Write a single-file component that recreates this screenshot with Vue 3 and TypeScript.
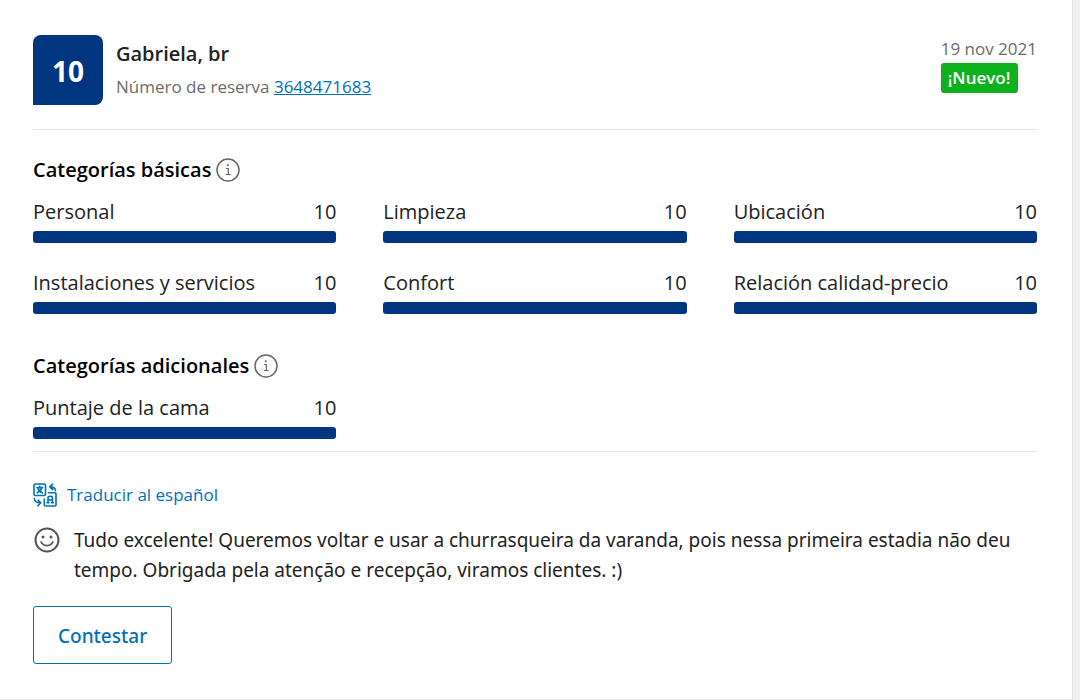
<script setup lang="ts">
interface Category {
  name: string
  score: number
}
interface Section {
  title: string
  help: string
  items: Category[]
}

const sections: Section[] = [
  {
    title: 'Categorías básicas',
    help: 'Información sobre las categorías básicas',
    items: [
      { name: 'Personal', score: 10 },
      { name: 'Limpieza', score: 10 },
      { name: 'Ubicación', score: 10 },
      { name: 'Instalaciones y servicios', score: 10 },
      { name: 'Confort', score: 10 },
      { name: 'Relación calidad-precio', score: 10 },
    ],
  },
  {
    title: 'Categorías adicionales',
    help: 'Información sobre las categorías adicionales',
    items: [{ name: 'Puntaje de la cama', score: 10 }],
  },
]
</script>

<template>
  <main class="page">
    <article class="card">
      <header class="head">
        <div class="score">10</div>
        <div class="guest">
          <h1 class="name">Gabriela, br</h1>
          <p class="booking">Número de reserva <a href="#reserva">3648471683</a></p>
        </div>
        <div class="meta">
          <time class="date" datetime="2021-11-19">19 nov 2021</time>
          <span class="new">¡Nuevo!</span>
        </div>
      </header>

      <div class="ratings">
        <section v-for="section in sections" :key="section.title">
          <h2 class="title">
            {{ section.title }}
            <button class="info" type="button" :aria-label="section.help">
              <svg viewBox="0 0 24 24" width="24" height="24" fill="none" stroke="currentColor">
                <circle cx="12" cy="12" r="11" stroke-width="1.5" />
                <path d="M10 10.5h2.3v6M9.8 16.5h4.8" stroke-width="1.2" />
                <circle cx="11.8" cy="7.3" r="1" fill="currentColor" stroke="none" />
              </svg>
            </button>
          </h2>
          <ul class="grid">
            <li v-for="item in section.items" :key="item.name">
              <div class="row">
                <span>{{ item.name }}</span>
                <span>{{ item.score }}</span>
              </div>
              <div class="track">
                <div class="fill" :style="{ width: item.score * 10 + '%' }"></div>
              </div>
            </li>
          </ul>
        </section>
      </div>

      <a class="translate" href="#traducir">
        <svg viewBox="0 0 24 24" width="24" height="24" fill="none" stroke="currentColor" stroke-width="1.6" stroke-linecap="round" stroke-linejoin="round">
          <rect x="1" y="1" width="11.5" height="11.5" rx="1.2" />
          <path d="M4 4.6h5.6M6.8 3.3v1.3M8.8 4.8C8.2 7 6.6 8.8 4.2 9.8M4.9 5c.6 2.2 2 3.8 4.5 4.8" />
          <path d="M15.5 9.8H22q1 0 1 1V22q0 1-1 1H12.3q-1 0-1-1v-6" />
          <path d="M15 19.8v-5q0-1.5 2.2-1.5t2.2 1.5v5M15 17h4.4M14 19.8h2M18.4 19.8h2" />
          <path d="M22.5 7.8c0-2.5-1.3-3.9-5.500-3.900M19.700 1.200L16.800 3.900l2.900 2.800" />
          <path d="M1.3 15.5c.2 2.600 1.800 4.300 6.300 4.300M5 17l2.800 2.800L5 22.600" />
        </svg>
        <span>Traducir al español</span>
      </a>

      <div class="review">
        <svg class="smile" viewBox="0 0 26 26" width="26" height="26" fill="none" stroke="currentColor">
          <circle cx="13" cy="13" r="11.5" stroke-width="2" />
          <circle cx="9" cy="10" r="1.5" fill="currentColor" stroke="none" />
          <circle cx="17" cy="10" r="1.5" fill="currentColor" stroke="none" />
          <path d="M7.2 15c2 4.700 9.600 4.700 11.600 0" stroke-width="1.8" stroke-linecap="round" />
        </svg>
        <p class="text">Tudo excelente! Queremos voltar e usar a churrasqueira da varanda, pois nessa primeira estadia não deu tempo. Obrigada pela atenção e recepção, viramos clientes. :)</p>
      </div>

      <button class="reply" type="button">Contestar</button>
    </article>
  </main>
</template>

<style>
body {
  background: #f1f1f1;
}
</style>

<style scoped>
.page {
  padding-right: 7px;
  font-family: "Segoe UI", "Open Sans", "Noto Sans", sans-serif;
  font-size: 20px;
  line-height: 30px;
  color: #222;
}
.card {
  padding: 35px 35px 35px 33px;
  background: #fff;
  border-right: 1px solid #e4e4e4;
  border-bottom: 2px solid #e4e4e4;
}
h1,
h2,
p,
ul {
  margin: 0;
  padding: 0;
}
ul {
  list-style: none;
}
.head {
  display: flex;
  gap: 13px;
  padding-bottom: 24px;
  border-bottom: 1px solid #e6e6e6;
}
.score {
  flex: none;
  width: 70px;
  height: 70px;
  line-height: 72px;
  text-align: center;
  font-size: 28px;
  font-weight: 700;
  color: #fff;
  background: #003580;
  border-radius: 8px 8px 8px 0;
}
.guest {
  flex: 1;
  padding-top: 3px;
}
.name {
  font-size: 20px;
  line-height: 32px;
  font-weight: 600;
}
.booking {
  font-size: 17px;
  line-height: 34px;
  color: #6b6b6b;
}
a {
  color: #0071b8;
}
.meta {
  display: flex;
  flex-direction: column;
  align-items: flex-start;
}
.date {
  font-size: 17px;
  line-height: 28px;
  color: #6b6b6b;
}
.new {
  padding: 0 8px 0 7px;
  font-size: 17px;
  line-height: 30px;
  font-weight: 600;
  color: #fff;
  background: #0db11c;
  border-radius: 3px;
}
.ratings {
  display: grid;
  gap: 37px;
  padding: 25px 0 12px;
  border-bottom: 1px solid #e6e6e6;
}
.title {
  display: flex;
  align-items: center;
  gap: 5px;
  margin-bottom: 14px;
  font-size: 20px;
  line-height: 30px;
  font-weight: 600;
  color: #000;
}
.info {
  display: flex;
  padding: 0;
  border: 0;
  background: none;
  color: #666;
}
.grid {
  display: grid;
  grid-template-columns: repeat(3, 1fr);
  gap: 27px 47px;
}
.row {
  display: flex;
  justify-content: space-between;
  margin-bottom: 6px;
  line-height: 26px;
}
.track {
  height: 12px;
  border-radius: 3px;
  background: #e6e6e6;
  overflow: hidden;
}
.fill {
  height: 100%;
  background: #003580;
}
.translate {
  display: flex;
  width: fit-content;
  align-items: center;
  gap: 10px;
  margin-top: 28px;
  font-size: 17px;
  text-decoration: none;
}
.review {
  display: flex;
  gap: 14px;
  margin: 15px 0 21px;
  padding-left: 1px;
}
.smile {
  flex: none;
  margin-top: 2px;
  color: #555;
}
.text {
  flex: 1;
  font-family: "Segoe UI", "Noto Sans", "Open Sans", sans-serif;
  font-size: 19px;
}
.reply {
  display: block;
  padding: 2px 24px 0;
  font-family: "Segoe UI", "Noto Sans", "Open Sans", sans-serif;
  font-size: 19px;
  line-height: 54px;
  font-weight: 500;
  color: #0071b8;
  background: #fff;
  border: 1px solid #0071b8;
  border-radius: 3px;
}
</style>
